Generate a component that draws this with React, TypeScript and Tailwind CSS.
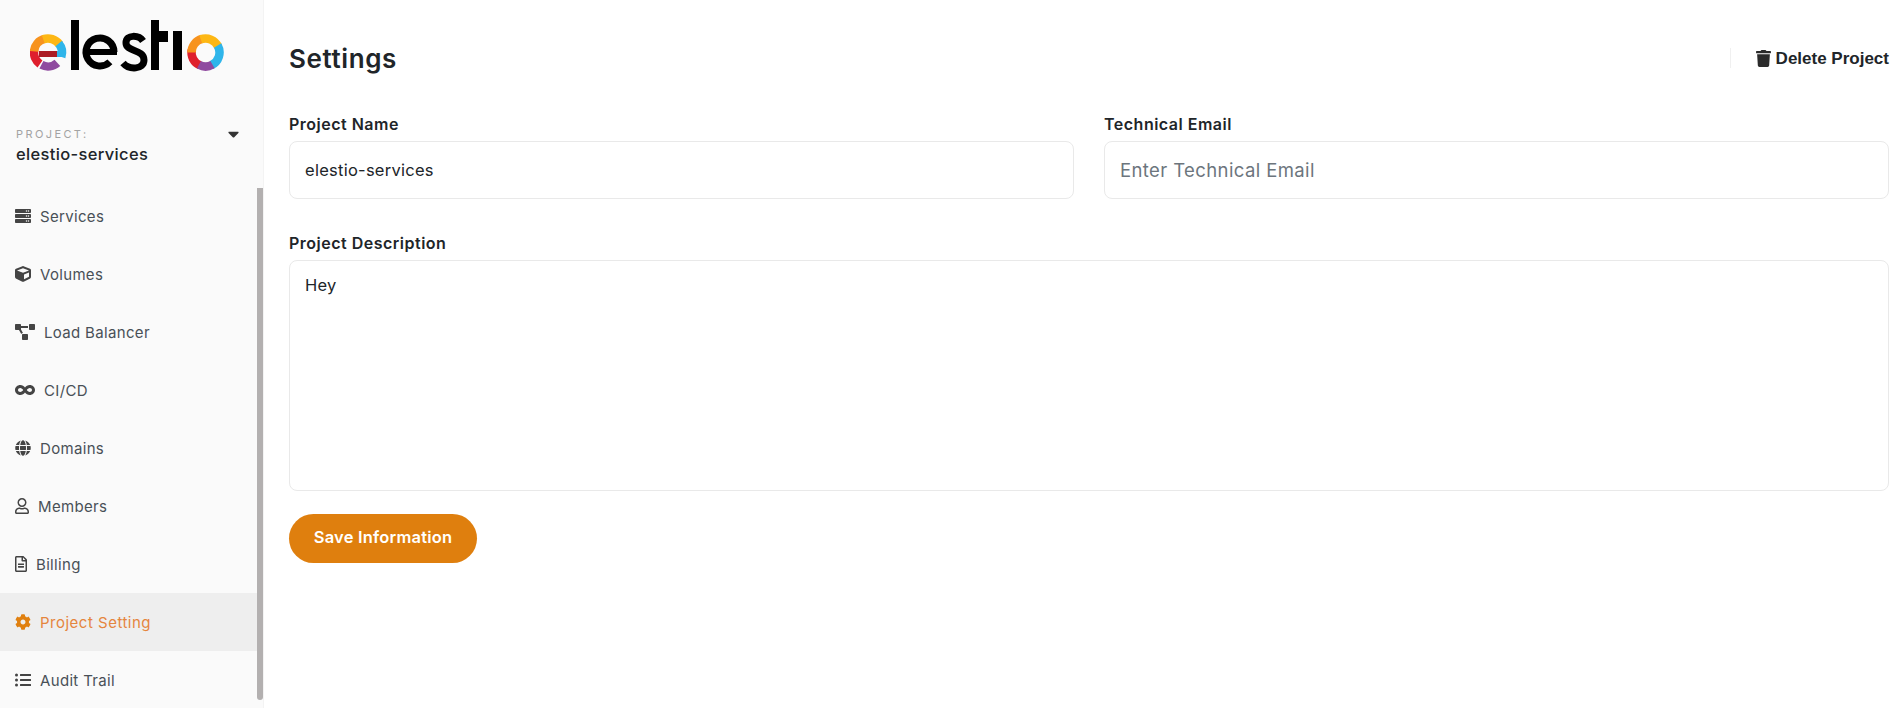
import React from 'react';
import {
  FaServer,
  FaCube,
  FaProjectDiagram,
  FaInfinity,
  FaGlobe,
  FaRegUser,
  FaRegFileAlt,
  FaCog,
  FaListUl,
  FaTrash,
  FaCaretDown,
} from 'react-icons/fa';

// stroke arc helper for the logo rings, angles in degrees clockwise from 3 o'clock
function arc(cx: number, cy: number, r: number, from: number, to: number) {
  const rad = (d: number) => (d * Math.PI) / 180;
  const x1 = cx + r * Math.cos(rad(from));
  const y1 = cy + r * Math.sin(rad(from));
  const x2 = cx + r * Math.cos(rad(to));
  const y2 = cy + r * Math.sin(rad(to));
  const large = to - from > 180 ? 1 : 0;
  return `M${x1.toFixed(2)} ${y1.toFixed(2)}A${r} ${r} 0 ${large} 1 ${x2.toFixed(2)} ${y2.toFixed(2)}`;
}

function Logo() {
  return (
    <svg width="195" height="52" viewBox="0 0 195 52" fill="none" aria-label="elestio">
      {/* colored e */}
      <path d={arc(18, 32.5, 14, 125, 190)} stroke="#df1f2d" strokeWidth="8.5" />
      <path d={arc(18, 32.5, 14, 185, 255)} stroke="#f7931e" strokeWidth="8.5" />
      <path d={arc(18, 32.5, 14, 250, 325)} stroke="#fdb714" strokeWidth="8.5" />
      <path d={arc(18, 32.5, 14, 320, 378)} stroke="#2fb5ea" strokeWidth="8.5" />
      <rect x="26" y="31" width="8" height="6" fill="#2fb5ea" />
      <path d={arc(18, 32.5, 14, 48, 118)} stroke="#8f4a9f" strokeWidth="8.5" />
      <rect x="9" y="31" width="18" height="6" fill="#ab1c24" />
      {/* l */}
      <rect x="41" y="0" width="8" height="50" fill="#000" />
      {/* second e */}
      <path d={arc(70, 32, 14, 45, 360)} stroke="#000" strokeWidth="7" />
      <rect x="56" y="29" width="31" height="6" fill="#000" />
      {/* s */}
      <path d="M113 21C109 15 96 14 96 23C96 32 114 29 114 40C114 50 99 50 93 43" stroke="#000" strokeWidth="7" />
      {/* t */}
      <rect x="121" y="0" width="8" height="50" fill="#000" />
      <rect x="121" y="11" width="17" height="11" fill="#000" />
      {/* i */}
      <rect x="143" y="11" width="9" height="39" fill="#000" />
      {/* colored o */}
      <path d={arc(175.5, 32.5, 14, 115, 190)} stroke="#df1f2d" strokeWidth="8.5" />
      <path d={arc(175.5, 32.5, 14, 180, 255)} stroke="#f7931e" strokeWidth="8.5" />
      <path d={arc(175.5, 32.5, 14, 250, 335)} stroke="#fdb714" strokeWidth="8.5" />
      <path d={arc(175.5, 32.5, 14, 330, 425)} stroke="#2fb5ea" strokeWidth="8.5" />
      <path d={arc(175.5, 32.5, 14, 60, 118)} stroke="#8f4a9f" strokeWidth="8.5" />
    </svg>
  );
}

const navItems = [
  { label: 'Services', icon: FaServer, iconClass: 'w-[16px] h-[16px]' },
  { label: 'Volumes', icon: FaCube, iconClass: 'w-[16px] h-[16px]' },
  { label: 'Load Balancer', icon: FaProjectDiagram, iconClass: 'w-[20px] h-[16px]' },
  { label: 'CI/CD', icon: FaInfinity, iconClass: 'w-[20px] h-[16px]' },
  { label: 'Domains', icon: FaGlobe, iconClass: 'w-[16px] h-[16px]' },
  { label: 'Members', icon: FaRegUser, iconClass: 'w-[14px] h-[16px]' },
  { label: 'Billing', icon: FaRegFileAlt, iconClass: 'w-[12px] h-[16px]' },
  { label: 'Project Setting', icon: FaCog, iconClass: 'w-[16px] h-[16px]', active: true },
  { label: 'Audit Trail', icon: FaListUl, iconClass: 'w-[16px] h-[16px]' },
];

export default function App() {
  return (
    <div className="flex h-[708px] overflow-hidden bg-white font-['Inter',sans-serif] text-[#212529]">
      {/* Sidebar */}
      <aside className="flex h-full w-[263px] shrink-0 flex-col bg-[#fafafa]">
        <div className="pl-[30px] pt-[20px]">
          <Logo />
        </div>

        <div className="flex h-[115px] shrink-0 justify-between pl-[16px] pr-[24px] pt-[55px]">
          <div>
            <div className="text-[11px] leading-[14px] tracking-[2.4px] text-[#a3a3a3]">PROJECT:</div>
            <div className="mt-[3px] text-[16.5px] leading-[20px] font-medium tracking-[0.34px] text-[#212529]">
              elestio-services
            </div>
          </div>
          <FaCaretDown className="mt-[-2px] h-[18px] w-[11px] text-[#333]" />
        </div>

        <div className="flex min-h-0 flex-1">
          <nav className="min-w-0 flex-1">
            {navItems.map((item) => {
              const Icon = item.icon;
              return (
                <div
                  key={item.label}
                  className={
                    item.active
                      ? 'flex h-[58px] items-center gap-[9px] bg-[#eeeeee] pl-[15px] text-[15px] tracking-[0.5px] text-[#e5853d]'
                      : 'flex h-[58px] items-center gap-[9px] pl-[15px] text-[15px] tracking-[0.33px] text-[#495057]'
                  }
                >
                  <Icon className={`${item.iconClass} shrink-0 ${item.active ? 'text-[#e08010]' : 'text-[#444]'}`} />
                  <span className="mt-[2px]">{item.label}</span>
                </div>
              );
            })}
          </nav>
          <div className="w-[6px] shrink-0">
            <div className="mt-[1px] h-[512px] rounded-b-[3px] bg-[#b3b0b0]" />
          </div>
        </div>
      </aside>

      {/* Main */}
      <main className="min-w-0 flex-1 border-l border-[#f3f3f3] pl-[25px] pr-[13px] pt-[40px]">
        <div className="flex h-[36px] items-center justify-between">
          <h1 className="text-[26px] font-semibold tracking-[0.6px] text-[#212529]">Settings</h1>
          <div className="flex h-[20px] items-center border-l border-[#f0f0f0] pl-[25px] font-['Liberation_Sans',sans-serif] text-[17px] font-bold text-[#212529]">
            <FaTrash className="mr-[5px] h-[17px] w-[15px] text-[#2b2b2b]" />
            <span className="mt-[2px]">Delete Project</span>
          </div>
        </div>

        <div className="mt-[38px] grid grid-cols-2 gap-[30px]">
          <label className="block">
            <span className="block text-[16px] leading-[20px] font-semibold tracking-[0.5px]">Project Name</span>
            <input
              readOnly
              value="elestio-services"
              className="mt-[7px] h-[58px] w-full rounded-[8px] border border-[#e9e9e9] bg-white px-[15px] text-[16.5px] tracking-[0.26px] text-[#212529] outline-none"
            />
          </label>
          <label className="block">
            <span className="block text-[16px] leading-[20px] font-semibold tracking-[0.5px]">Technical Email</span>
            <input
              readOnly
              placeholder="Enter Technical Email"
              className="mt-[7px] h-[58px] w-full rounded-[8px] border border-[#e9e9e9] bg-white px-[15px] pb-[1px] text-[18.5px] tracking-[0.39px] outline-none placeholder:text-[#6c757d]"
            />
          </label>
        </div>

        <label className="mt-[34px] block">
          <span className="block text-[16px] leading-[20px] font-semibold tracking-[0.5px]">Project Description</span>
          <textarea
            readOnly
            value="Hey"
            className="mt-[7px] block h-[231px] w-full resize-none rounded-[8px] border border-[#e9e9e9] bg-white px-[15px] py-[12px] text-[16.5px] tracking-[0.26px] text-[#212529] outline-none"
          />
        </label>

        <button className="mt-[23px] h-[49px] w-[188px] rounded-full bg-[#df7f0e] pb-[2px] text-[16.5px] font-semibold tracking-[0.2px] text-white">
          Save Information
        </button>
      </main>
    </div>
  );
}
